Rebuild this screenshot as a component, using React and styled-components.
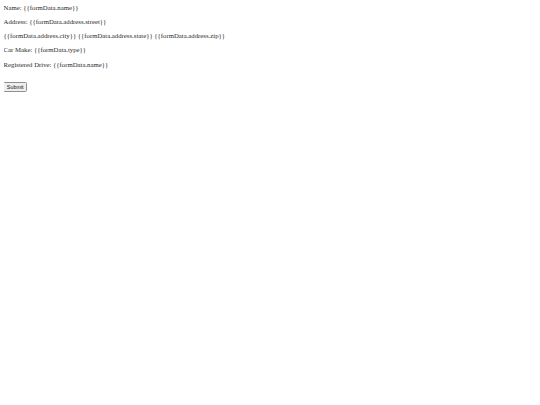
import React from "react";
import styled, { createGlobalStyle } from "styled-components";

const GlobalStyle = createGlobalStyle`
  body {
    margin: 3.6px;
    font-family: "Liberation Serif", "Times New Roman", serif;
    font-size: 6.75px;
    color: #2a2a2a;
    background: #fff;
  }
`;

const Form = styled.form`
  display: flex;
  flex-direction: column;
`;

const Line = styled.p`
  margin: 0 0 ${(p) => (p.$last ? "13px" : "6.25px")};
  line-height: 8px;
`;

const SubmitButton = styled.button`
  align-self: flex-start;
  margin-left: -0.4px;
  font-family: "Liberation Sans", Arial, sans-serif;
  font-size: 5.4px;
  line-height: 6px;
  padding: 1px 2.6px;
  border: 0.8px solid #8f8f8f;
  border-radius: 1.5px;
  background: #efefef;
  color: #111;
`;

const lines = [
  "Name: {{formData.name}}",
  "Address: {{formData.address.street}}",
  "{{formData.address.city}} {{formData.address.state}} {{formData.address.zip}}",
  "Car Make: {{formData.type}}",
  "Registered Drive: {{formData.name}}",
];

export default function App() {
  return (
    <>
      <GlobalStyle />
      <Form onSubmit={(e) => e.preventDefault()}>
        {lines.map((text, i) => (
          <Line key={i} $last={i === lines.length - 1}>
            {text}
          </Line>
        ))}
        <SubmitButton type="submit">Submit</SubmitButton>
      </Form>
    </>
  );
}
